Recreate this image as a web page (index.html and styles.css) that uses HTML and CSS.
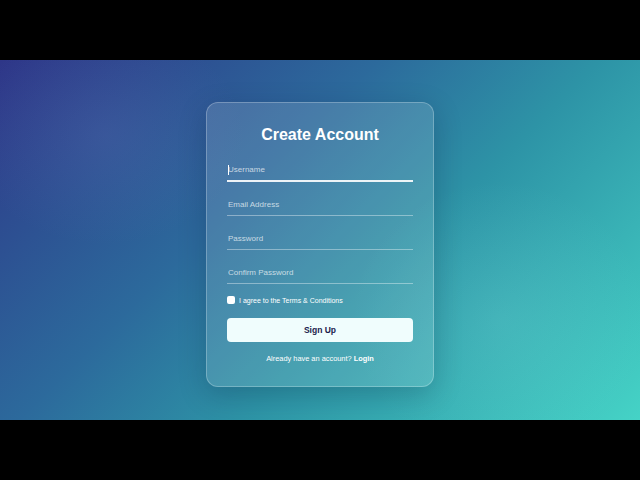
FILE: index.html
```html
<!DOCTYPE html>
<html lang="en">
<head>
<meta charset="utf-8">
<title>Create Account</title>
<link rel="stylesheet" href="styles.css">
</head>
<body>
<div class="stage">
  <form class="card">
    <h1 class="title">Create Account</h1>
    <div class="field focused">
      <input class="input" type="text" placeholder="Username">
      <span class="caret"></span>
    </div>
    <div class="field">
      <input class="input" type="email" placeholder="Email Address">
    </div>
    <div class="field">
      <input class="input" type="password" placeholder="Password">
    </div>
    <div class="field">
      <input class="input" type="password" placeholder="Confirm Password">
    </div>
    <label class="terms">
      <input class="check" type="checkbox">
      <span>I agree to the Terms &amp; Conditions</span>
    </label>
    <button class="btn" type="button">Sign Up</button>
    <p class="foot">Already have an account? <a class="link" href="#">Login</a></p>
  </form>
</div>
</body>
</html>
```

FILE: styles.css
```css
html, body {
  margin: 0;
  padding: 0;
  background: #000;
  font-family: "Liberation Sans", Arial, sans-serif;
}
.stage {
  margin-top: 60px;
  height: 360px;
  display: flex;
  justify-content: center;
  align-items: flex-start;
  background:
    radial-gradient(ellipse 140px 110px at 105px 75px, rgba(120,130,200,0.16), rgba(120,130,200,0) 100%),
    radial-gradient(ellipse 150px 140px at 500px 260px, rgba(150,230,230,0.14), rgba(150,230,230,0) 100%),
    linear-gradient(135deg, #2e3688 0%, #2c6a9c 38%, #2d93a6 60%, #45d3c6 100%);
}
.card {
  box-sizing: border-box;
  width: 228px;
  margin-top: 42px;
  padding: 22px 20px 22px;
  background: rgba(255,255,255,0.13);
  border: 1px solid rgba(255,255,255,0.25);
  border-radius: 12px;
  box-shadow: 0 8px 28px rgba(0,20,50,0.22);
  display: flex;
  flex-direction: column;
}
.title {
  margin: 0 0 13px;
  font-size: 16px;
  line-height: 20px;
  font-weight: 700;
  color: #fff;
  text-align: center;
  letter-spacing: 0;
}
.field {
  position: relative;
  margin-bottom: 10px;
}
.input {
  display: block;
  box-sizing: border-box;
  width: 100%;
  height: 24px;
  padding: 1px 1px 0;
  margin: 0;
  border: 0;
  border-bottom: 1px solid rgba(255,255,255,0.38);
  background: transparent;
  color: #fff;
  font-family: "Liberation Sans", Arial, sans-serif;
  font-size: 8px;
  outline: none;
}
.input::placeholder {
  color: rgba(255,255,255,0.7);
}
.focused .input {
  border-bottom: 2px solid rgba(255,255,255,0.9);
}
.caret {
  position: absolute;
  left: 1px;
  top: 7px;
  width: 1px;
  height: 10px;
  background: #fff;
}
.terms {
  display: flex;
  align-items: center;
  gap: 4px;
  margin-top: 1px;
  height: 10px;
  font-size: 7px;
  color: #fff;
}
.check {
  -webkit-appearance: none;
  appearance: none;
  width: 8px;
  height: 8px;
  margin: 0;
  background: #fff;
  border-radius: 2px;
  border: 0;
}
.btn {
  margin-top: 13px;
  height: 24px;
  border: 0;
  border-radius: 4px;
  background: #f0fdfd;
  color: #1b1b4c;
  font-family: "Liberation Sans", Arial, sans-serif;
  font-size: 8.5px;
  font-weight: 700;
  padding: 0;
}
.foot {
  margin: 12px 0 0;
  font-size: 7.4px;
  line-height: 10px;
  color: #fff;
  text-align: center;
}
.link {
  color: #fff;
  font-weight: 700;
  text-decoration: none;
}
```
